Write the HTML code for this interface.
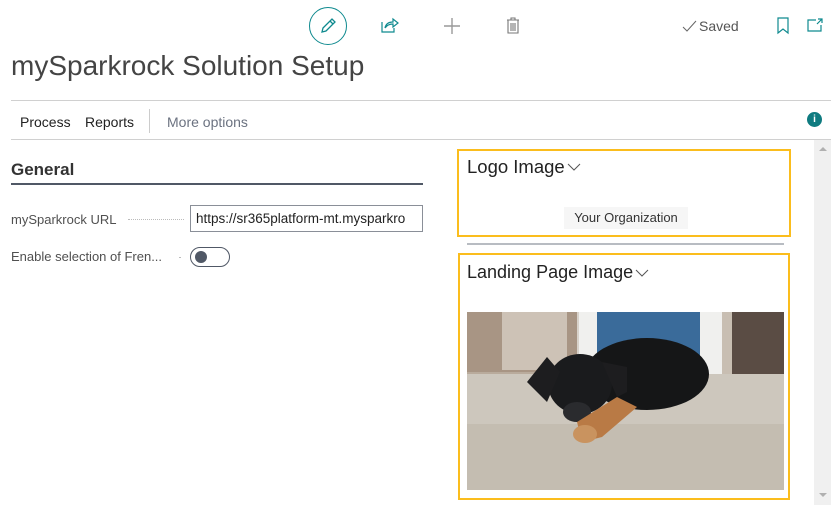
<!DOCTYPE html>
<html><head><meta charset="utf-8"><style>
*{margin:0;padding:0;box-sizing:border-box}
body{width:839px;height:513px;background:#fff;font-family:"Liberation Sans",sans-serif;color:#212121;position:relative;overflow:hidden}
.a{position:absolute}
</style></head><body>
<div class="a" style="left:309px;top:7px;width:38px;height:38px;border:1.5px solid #0f8a8f;border-radius:50%"></div>
<svg class="a" style="left:318px;top:16px" width="20" height="20" viewBox="0 0 20 20"><path d="M4 16 L5 12 L14 3 L17 6 L8 15 Z M12 5 L15 8" fill="none" stroke="#0f8a8f" stroke-width="1.3"/></svg>
<svg class="a" style="left:380px;top:16px" width="20" height="18" viewBox="0 0 20 18"><path d="M2 6 V16 H14 V12 M5 12 C6 7 10 6 13 6 V3 L18 7 L13 11 V8 C10 8 7 9 5 12" fill="none" stroke="#0f8a8f" stroke-width="1.2"/></svg>
<svg class="a" style="left:443px;top:17px" width="18" height="18"><path d="M9 1 V17 M1 9 H17" stroke="#999" stroke-width="1.4"/></svg>
<svg class="a" style="left:505px;top:16px" width="16" height="19" viewBox="0 0 16 19"><path d="M2 4 H14 M6 4 V2 H10 V4 M3 4 V17 H13 V4 M6 7 V15 M8 7 V15 M10 7 V15" fill="none" stroke="#777" stroke-width="1.1"/></svg>
<svg class="a" style="left:682px;top:19px" width="16" height="14"><path d="M1 8 L5 12 L14 2" fill="none" stroke="#666" stroke-width="1"/></svg>
<div class="a" style="left:699px;top:18px;font-size:14px;color:#555">Saved</div>
<svg class="a" style="left:776px;top:17px" width="14" height="18"><path d="M2 1 H12 V16 L7 12 L2 16 Z" fill="none" stroke="#0f8a8f" stroke-width="1.2"/></svg>
<svg class="a" style="left:806px;top:17px" width="18" height="16"><path d="M10 3 H2 V14 H15 V8 M12 2 H16 V6 M16 2 L11 7" fill="none" stroke="#0f8a8f" stroke-width="1.2"/></svg>
<div class="a" style="left:11px;top:50px;font-size:28px;color:#444;letter-spacing:0px">mySparkrock Solution Setup</div>
<div class="a" style="left:11px;top:100px;width:820px;height:1px;background:#d0d0d0"></div>
<div class="a" style="left:20px;top:114px;font-size:14px;color:#222">Process</div>
<div class="a" style="left:85px;top:114px;font-size:14px;color:#222">Reports</div>
<div class="a" style="left:149px;top:109px;width:1px;height:24px;background:#ccc"></div>
<div class="a" style="left:167px;top:114px;font-size:14px;color:#6b7280">More options</div>
<div class="a" style="left:807px;top:112px;width:15px;height:15px;border-radius:50%;background:#0f7b80;color:#fff;font-size:10px;font-weight:bold;text-align:center;line-height:15px">i</div>
<div class="a" style="left:11px;top:139px;width:820px;height:1px;background:#d0d0d0"></div>
<div class="a" style="left:11px;top:160px;font-size:17px;font-weight:bold;color:#333">General</div>
<div class="a" style="left:11px;top:183px;width:412px;height:2px;background:#505866"></div>
<div class="a" style="left:11px;top:212px;font-size:13px;color:#505050">mySparkrock URL</div>
<div class="a" style="left:128px;top:219px;width:56px;border-top:1px dotted #bbb"></div>
<div class="a" style="left:190px;top:205px;width:233px;height:27px;border:1px solid #8a8f98;font-size:13.5px;color:#222;padding:5px 5px;white-space:nowrap;overflow:hidden">https://sr365platform-mt.mysparkro</div>
<div class="a" style="left:11px;top:249px;font-size:13px;color:#505050">Enable selection of Fren...</div>
<div class="a" style="left:179px;top:257px;width:2px;height:1px;background:#bbb"></div>
<div class="a" style="left:190px;top:247px;width:40px;height:20px;border:1px solid #505866;border-radius:10px"></div>
<div class="a" style="left:195px;top:251px;width:12px;height:12px;border-radius:50%;background:#505866"></div>
<div class="a" style="left:457px;top:149px;width:334px;height:88px;border:2px solid #fbbd1d"></div>
<div class="a" style="left:467px;top:156px;font-size:18.5px;color:#222">Logo Image</div>
<svg class="a" style="left:567px;top:163px" width="14" height="9"><path d="M1 1 L7 7 L13 1" fill="none" stroke="#555" stroke-width="1"/></svg>
<div class="a" style="left:564px;top:207px;width:124px;height:22px;background:#f6f6f6;font-size:13px;color:#333;text-align:center;line-height:22px">Your Organization</div>
<div class="a" style="left:467px;top:243px;width:317px;height:2px;background:#b8bcc2"></div>
<div class="a" style="left:458px;top:253px;width:332px;height:247px;border:2px solid #fbbd1d"></div>
<div class="a" style="left:467px;top:262px;font-size:18px;color:#222">Landing Page Image</div>
<svg class="a" style="left:635px;top:269px" width="14" height="9"><path d="M1 1 L7 7 L13 1" fill="none" stroke="#555" stroke-width="1"/></svg>
<svg class="a" style="left:467px;top:312px" width="317" height="178" viewBox="0 0 317 178">
<rect width="317" height="178" fill="#c9c3b8"/>
<rect width="317" height="62" fill="#b9ab9c"/>
<rect x="0" y="0" width="110" height="60" fill="#a89584"/>
<rect x="35" y="0" width="65" height="58" fill="#cdc2b6"/>
<rect x="110" y="0" width="20" height="62" fill="#d8d2ca"/>
<rect x="112" y="0" width="150" height="65" fill="#f0f0ee"/>
<rect x="130" y="0" width="103" height="45" fill="#3a6b9a"/>
<rect x="262" y="0" width="55" height="68" fill="#5a4c44"/>
<rect x="255" y="0" width="10" height="64" fill="#c8beb2"/>
<rect x="0" y="62" width="317" height="50" fill="#cdc7bd"/>
<rect x="0" y="112" width="317" height="66" fill="#c4bdb1"/>
<ellipse cx="180" cy="62" rx="62" ry="36" fill="#151617"/>
<ellipse cx="113" cy="72" rx="32" ry="30" fill="#1a1b1d"/>
<path d="M60 70 L80 45 L93 60 L80 90 Z" fill="#1d1d1f"/>
<path d="M135 50 L160 55 L160 80 L150 85 Z" fill="#1d1d1f"/>
<ellipse cx="110" cy="100" rx="14" ry="10" fill="#2a2b2e"/>
<path d="M110 110 L150 85 L170 95 L135 125 L115 130 Z" fill="#b97a45"/>
<ellipse cx="118" cy="122" rx="12" ry="9" fill="#c9935f"/>
</svg>
<div class="a" style="left:814px;top:140px;width:17px;height:365px;background:#f0f0f0"></div>
<svg class="a" style="left:818px;top:146px" width="10" height="6"><path d="M1 5 L5 1 L9 5 Z" fill="#b0b0b0"/></svg>
<svg class="a" style="left:818px;top:492px" width="10" height="6"><path d="M1 1 L5 5 L9 1 Z" fill="#b0b0b0"/></svg>
</body></html>
